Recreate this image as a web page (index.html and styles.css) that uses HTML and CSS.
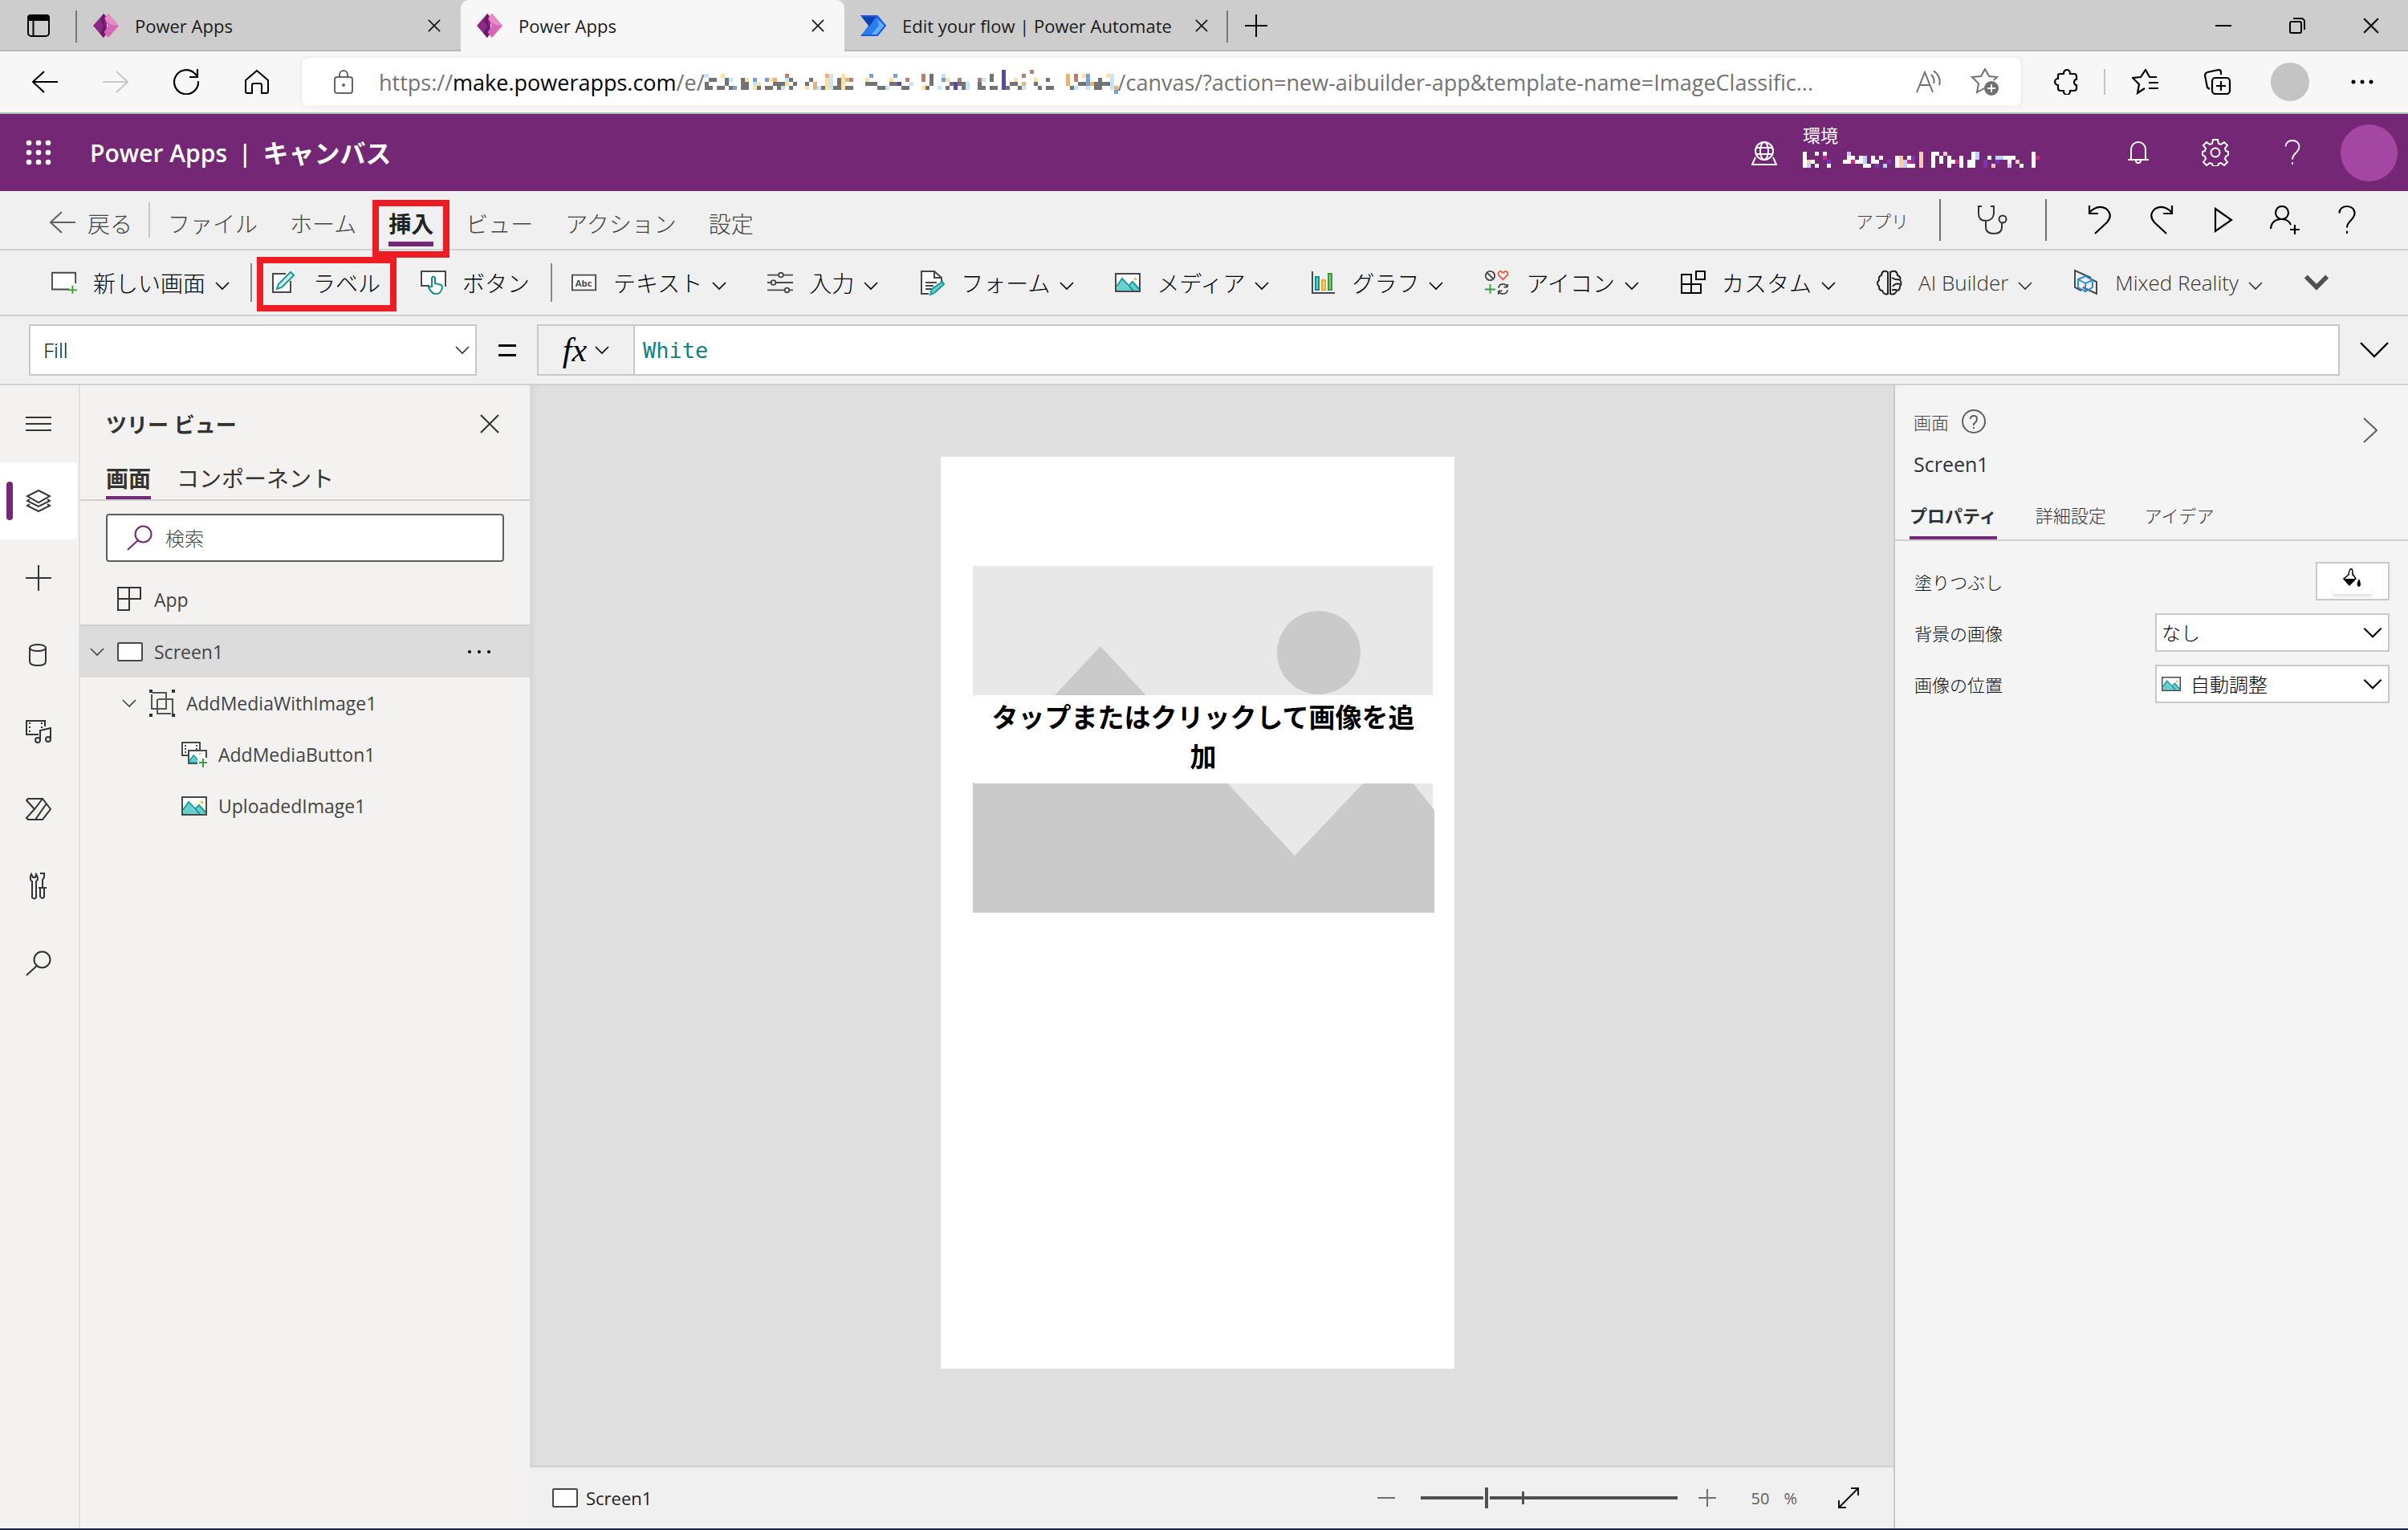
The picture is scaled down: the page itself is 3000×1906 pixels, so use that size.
FILE: index.html
```html
<!DOCTYPE html>
<html lang="ja">
<head>
<meta charset="utf-8">
<meta name="viewport" content="width=device-width, initial-scale=1">
<title>Power Apps | キャンバス</title>
<link rel="stylesheet" href="styles.css">
</head>
<body>
<svg class="sprite" aria-hidden="true">
  <symbol id="chev" viewBox="0 0 18 12"><path d="M1 2l8 8 8-8" fill="none" stroke="currentColor" stroke-width="1.6"/></symbol>
  <symbol id="close" viewBox="0 0 18 18"><path d="M1 1l16 16M17 1L1 17" fill="none" stroke="currentColor" stroke-width="2"/></symbol>
  <symbol id="app-logo" viewBox="0 0 32 32">
    <path d="M13 1L0 16l13 15 4-5V5z" fill="#8b2a86"/>
    <path d="M13 1l4 5-3 7 3 8-4 10-5-6 5-8-4-8z" fill="#6b1a68"/>
    <path d="M19 1l13 15-13 15-5-6c0-5 6-6 4-11-2-4-5-5-3-9z" fill="#d667b5"/>
    <path d="M19 1l13 15-9-1-6-4-2-5z" fill="#e58bc8"/>
  </symbol>
  <symbol id="picture" viewBox="0 0 32 24">
    <path d="M1 1h30v22H1z" fill="#fff"/>
    <path d="M2 19L9 8l8 10 5-6 8 8v2H2z" fill="#66cfcf"/>
    <path d="M2 17L9 7l14 15M17 16l5-5 8 9" fill="none" stroke="#1a9a96" stroke-width="2"/>
    <path d="M24 6h3v3h-3z" fill="#ffb94f"/>
    <path d="M1 1h30v22H1z" fill="none" stroke="#484848" stroke-width="2"/>
  </symbol>
  <symbol id="screen" viewBox="0 0 32 24"><rect x="1" y="1" width="30" height="22" rx="1" fill="#fff" stroke="#484848" stroke-width="2"/></symbol>
  <symbol id="search" viewBox="0 0 32 32"><path d="M14 19L1 31" fill="none" stroke="currentColor" stroke-width="2"/><circle cx="20.500" cy="11.500" r="10" fill="none" stroke="currentColor" stroke-width="2"/></symbol>
  <symbol id="help" viewBox="0 0 20 34"><path d="M1 9c0-5 4-8 9-8s9 3 9 8c0 8-9 9-9 17M10 30v3" fill="none" stroke="currentColor" stroke-width="2"/></symbol>
</svg>

<header class="browser">
  <div class="tabstrip">
    <button class="tab-menu" aria-label="タブ操作メニュー"><svg width="28" height="28" viewBox="0 0 28 28"><path d="M0 8V4a4 4 0 014-4h20a4 4 0 014 4v4z"/><rect x="1" y="1" width="26" height="26" rx="4" fill="none" stroke="#000" stroke-width="2"/><path d="M7.500 8v19" stroke="#000" stroke-width="2"/></svg></button>
    <div class="tab"><svg width="32" height="32"><use href="#app-logo"/></svg><span>Power Apps</span><button aria-label="閉じる"><svg width="16" height="16"><use href="#close"/></svg></button></div>
    <div class="tab active"><svg width="32" height="32"><use href="#app-logo"/></svg><span>Power Apps</span><button aria-label="閉じる"><svg width="16" height="16"><use href="#close"/></svg></button></div>
    <div class="tab"><svg width="32" height="26" viewBox="0 0 32 26"><path d="M0 0h21l11 13-11 13H0l10-13z" fill="#2b7cf0"/><path d="M0 0h21l-10 14z" fill="#0d3fb5"/><path d="M21 6l11 7-11 13h-9l11-13z" fill="#62b0fb"/><path d="M1 1h20l10 12-10 12H1" fill="none" stroke="#1a56e8" stroke-width="2"/></svg><span>Edit your flow | Power Automate</span><button aria-label="閉じる"><svg width="16" height="16"><use href="#close"/></svg></button></div>
    <button class="new-tab" aria-label="新しいタブ"><svg width="28" height="28" viewBox="0 0 28 28"><path d="M14 0v28M0 14h28" stroke="#000" stroke-width="2"/></svg></button>
    <div class="window-buttons">
      <button aria-label="最小化"><svg width="20" height="20" viewBox="0 0 20 20"><path d="M0 10h20" stroke="#000" stroke-width="2"/></svg></button>
      <button aria-label="元に戻す"><svg width="20" height="20" viewBox="0 0 20 20" fill="none" stroke="#000" stroke-width="2"><rect x="1" y="5" width="14" height="14" rx="2"/><path d="M5 1h10a4 4 0 014 4v10"/></svg></button>
      <button aria-label="閉じる"><svg width="20" height="20"><use href="#close"/></svg></button>
    </div>
  </div>
  <div class="addressrow">
    <nav class="nav-buttons">
      <button aria-label="戻る"><svg width="32" height="28" viewBox="0 0 32 28" fill="none" stroke="#000" stroke-width="2"><path d="M32 14H1M15 1L1 14l14 13"/></svg></button>
      <button aria-label="進む"><svg width="32" height="28" viewBox="0 0 32 28" fill="none" stroke="#c8c8c8" stroke-width="2"><path d="M0 14h31M17 1l14 13-14 13"/></svg></button>
      <button aria-label="更新"><svg width="32" height="32" viewBox="0 0 32 32" fill="none" stroke="#000" stroke-width="2.200"><path d="M31 15a15 15 0 11-5-10l4 4M30 0v10H20"/></svg></button>
      <button aria-label="ホーム"><svg width="30" height="30" viewBox="0 0 30 30" fill="none" stroke="#000" stroke-width="2"><path d="M15 1L1 13v14a2 2 0 002 2h6V19a2 2 0 012-2h8a2 2 0 012 2v10h6a2 2 0 002-2V13z"/></svg></button>
    </nav>
    <div class="addressbar">
      <svg class="lock" width="24" height="30" viewBox="0 0 24 30" fill="none" stroke="#666" stroke-width="2"><rect x="1" y="9" width="22" height="20" rx="3"/><path d="M7 9V6a5 5 0 0110 0v3"/><circle cx="12" cy="19" r="1"/></svg>
      <span class="url">https://<b>make.powerapps.com</b>/e/</span>
      <svg class="mosaic" width="515" height="30" viewBox="0 -1 103 6" shape-rendering="crispEdges">
        <path fill="#737373" d="M1 1h2v1H1zM0 2h1v1H0zM0 3h2v1H0zM5 1h1v2H5zM3 3h2v1H3zM6 3h2v1H6zM9 1h2v3H9zM12 3h2v1h-2zM15 3h2v1h-2zM17 2h4v1h-4zM18 3h1v1h-1zM21 1h1v1h-1zM22 2h1v1h-1zM21 3h1v1h-1zM26 1h1v1h-1zM25 2h1v1h-1zM29 3h1v1h-1zM32 3h1v1h-1zM33 1h1v3h-1zM35 3h2v1h-2zM40 2h3v1h-3zM43 3h2v1h-2zM46 2h2v1h-2zM49 3h2v1h-2zM56 0h1v3h-1zM55 3h1v1h-1zM61 2h4v1h-4zM64 3h1v1h-1zM60 3h1v1h-1zM68 2h1v1h-1zM68 3h2v1h-2zM71 0h1v2h-1zM71 3h2v1h-2zM75 3h1v1h-1zM76 2h2v1h-2zM78 3h1v1h-1zM82 2h1v1h-1zM83 3h1v1h-1zM85 1h1v1h-1zM85 3h2v1h-2zM91 3h1v1h-1zM93 2h2v1h-2zM97 2h5v1h-5zM97 3h2v1h-2zM98 1h1v1h-1z"/>
        <path fill="#ffe0a8" d="M4 0h1v1H4zM10 1h1v1h-1zM13 2h1v1h-1zM16 1h1v1h-1zM20 2h1v1h-1zM25 3h1v1h-1zM30 1h1v3h-1zM34 0h1v4h-1zM40 1h1v1h-1zM46 1h1v1h-1zM54 3h1v1h-1zM60 1h1v1h-1zM77 1h1v1h-1zM82 1h1v1h-1zM94 0h1v1h-1zM100 0h1v1h-1zM12 3h1v1h-1z"/>
        <path fill="#e8b27a" d="M17 1h1v1h-1zM27 2h1v2h-1zM30 0h1v1h-1zM35 1h1v1h-1zM79 2h1v1h-1zM90 0h1v3h-1zM96 2h1v1h-1zM102 3h1v1h-1z"/>
        <path fill="#b58070" d="M20 0h1v1h-1zM36 1h1v1h-1zM50 1h1v1h-1zM54 0h1v2h-1zM68 1h1v1h-1zM79 0h1v1h-1zM81 -1h1v1h-1zM92 0h1v2h-1zM63 1h1v1h-1z"/>
        <path fill="#6fa3dc" d="M15 1h1v1h-1zM7 3h1v1H7zM41 0h1v1h-1zM47 0h1v1h-1zM59 1h1v1h-1zM95 0h1v4h-1zM102 4h1v1h-1zM12 1h1v1h-1z"/>
        <path fill="#c3e6ff" d="M0 0h1v1H0zM6 1h1v1H6zM12 2h1v1h-1zM19 3h1v1h-1zM20 1h1v1h-1zM28 3h1v1h-1zM31 0h1v4h-1zM45 3h1v1h-1zM51 2h1v1h-1zM59 0h1v1h-1zM58 3h1v1h-1zM65 2h1v2h-1zM69 1h1v1h-1zM79 3h1v1h-1zM92 3h1v1h-1zM101 0h1v4h-1zM95 3h1v1h-1z"/>
        <path fill="#5a4c94" d="M48 2h1v1h-1zM62 2h1v2h-1zM74 -1h1v5h-1z"/>
      </svg>
      <span class="url">/canvas/?action=new-aibuilder-app&amp;template-name=ImageClassific...</span>
      <span class="address-actions">
        <button aria-label="音声で読み上げる"><svg width="32" height="28" viewBox="0 0 32 28" fill="none" stroke="#707070" stroke-width="2"><path d="M1 27L11 2l10 25M5 18h12M19 5q5 5 3 11M22 0q10 8 7 18"/></svg></button>
        <button aria-label="お気に入りに追加"><svg width="36" height="34" viewBox="0 0 36 34"><path d="M17 25l-9 5 2-11-8-8 11-1 5-9 5 9 10 1-4 4" fill="none" stroke="#707070" stroke-width="2"/><circle cx="26" cy="25" r="9" fill="#707070"/><path d="M26 20v10M21 25h10" stroke="#fff" stroke-width="2"/></svg></button>
      </span>
    </div>
    <div class="browser-actions">
      <button aria-label="拡張機能"><svg width="30" height="32" viewBox="0 0 30 32" fill="none" stroke="#000" stroke-width="2.200"><path d="M7 6h5v-1a4 4 0 018 0v1h5q3 0 3 3v4h-1a4 4 0 000 7h1v4q0 3-3 3h-5v1a4 4 0 01-8 0v-1H8q-3 0-3-3v-4a4 4 0 010-8V8q0-2 2-2z"/></svg></button>
      <i class="rule"></i>
      <button aria-label="お気に入り"><svg width="34" height="32" viewBox="0 0 34 32" fill="none" stroke="#000" stroke-width="2.200"><path d="M16 24l-9 6 2-11-8-8 10-1 6-9 5 9h9M21 17h12M21 24h12"/></svg></button>
      <button aria-label="コレクション"><svg width="34" height="32" viewBox="0 0 34 32" fill="none" stroke="#000" stroke-width="2.200"><path d="M7 25l-3-2L1 8q0-3 3-4l14-3q3 0 3 3v3"/><rect x="10" y="11" width="22" height="20" rx="4"/><path d="M21 15v12M15 21h12"/></svg></button>
      <button aria-label="プロファイル"><i class="profile"></i></button>
      <button aria-label="設定など"><svg width="28" height="6" viewBox="0 0 28 6"><circle cx="3" cy="3" r="2.500"/><circle cx="14" cy="3" r="2.500"/><circle cx="25" cy="3" r="2.500"/></svg></button>
    </div>
  </div>
</header>

<header class="suite">
  <button class="waffle" aria-label="アプリ起動ツール"><svg width="32" height="32" viewBox="0 0 32 32" fill="#fff"><circle cx="4" cy="4" r="3.300"/><circle cx="16" cy="4" r="3.300"/><circle cx="28" cy="4" r="3.300"/><circle cx="4" cy="16" r="3.300"/><circle cx="16" cy="16" r="3.300"/><circle cx="28" cy="16" r="3.300"/><circle cx="4" cy="28" r="3.300"/><circle cx="16" cy="28" r="3.300"/><circle cx="28" cy="28" r="3.300"/></svg></button>
  <h1><span>Power Apps</span><span>|</span><span class="area">キャンバス</span></h1>
  <div class="environment">
    <svg width="32" height="30" viewBox="0 0 32 30" fill="none" stroke="#fff" stroke-width="2"><circle cx="16" cy="12" r="11"/><ellipse cx="16" cy="12" rx="5" ry="11"/><path d="M6 8h20M6 16h20M5 20l-4 9h30l-4-9"/></svg>
    <div>
      <span>環境</span>
      <svg width="295" height="20" viewBox="0 0 59 4" shape-rendering="crispEdges">
        <path fill="#fff" d="M0 0h1v4H0zM1 2h2v1H1zM3 0h1v1H3zM3 3h1v1H3zM5 0h1v1H5zM6 3h1v1H6zM10 2h2v1h-2zM11 0h1v2h-1zM12 1h1v1h-1zM13 2h1v1h-1zM14 1h1v2h-1zM15 3h2v1h-2zM17 1h1v2h-1zM18 2h1v1h-1zM19 1h1v1h-1zM23 1h1v3h-1zM26 1h1v1h-1zM26 3h2v1h-2zM32 0h2v1h-2zM32 1h1v3h-1zM34 1h1v2h-1zM36 1h1v3h-1zM37 2h2v1h-2zM39 1h1v3h-1zM41 2h1v2h-1zM42 0h1v4h-1zM46 1h1v1h-1zM50 1h3v1h-3zM51 2h1v2h-1zM54 3h1v1h-1zM57 0h1v4h-1z"/>
        <path fill="#b5d4ff" d="M1 3h1v1H1zM11 0h1v1h-1zM15 1h1v2h-1zM20 3h1v1h-1zM25 2h1v2h-1zM43 0h1v2h-1zM48 1h2v1h-2zM51 3h1v1h-1z"/>
        <path fill="#ffcbb0" d="M24 1h1v3h-1zM29 0h1v4h-1zM35 0h1v1h-1zM47 3h1v1h-1zM53 2h1v1h-1zM1 2h1v1H1z"/>
        <path fill="#7a35b8" d="M6 2h1v1H6zM18 3h1v1h-1zM21 2h1v1h-1zM27 1h1v2h-1zM45 2h1v2h-1zM48 2h1v1h-1z"/>
        <path fill="#c8307a" d="M5 1h1v1H5zM12 2h1v1h-1zM26 2h1v1h-1zM38 2h1v1h-1zM58 1h1v1h-1z"/>
      </svg>
    </div>
  </div>
  <div class="suite-actions">
    <button aria-label="通知"><svg width="26" height="28" viewBox="0 0 26 28" fill="none" stroke="#fff" stroke-width="2"><path d="M0 23h26M4 23V10a9 9 0 0118 0v13M10 24a3 3 0 006 0"/></svg></button>
    <button aria-label="設定"><svg width="34" height="34" viewBox="0 0 34 34" fill="none" stroke="#fff" stroke-width="2"><path d="M14 1h6l1 5 3 1 4-3 4 4-3 4 1 3 3 1v4l-3 2-1 3 3 4-4 4-4-3-3 1-1 3h-6l-1-3-3-1-4 3-4-4 3-4-1-3-3-2v-4l3-1 1-3-3-4 4-4 4 3 3-1z"/><circle cx="17" cy="17" r="5.500"/></svg></button>
    <button aria-label="ヘルプ"><svg width="20" height="32"><use href="#help"/></svg></button>
    <i class="avatar"></i>
  </div>
</header>

<nav class="menubar">
  <button class="back"><svg width="32" height="28" viewBox="0 0 32 28" fill="none" stroke="#606060" stroke-width="2"><path d="M32 14H1M15 1L1 14l14 13"/></svg>戻る</button>
  <div class="menus">
    <button>ファイル</button><button>ホーム</button><button class="current">挿入</button><button>ビュー</button><button>アクション</button><button>設定</button>
  </div>
  <div class="menu-actions">
    <span class="app-label">アプリ</span>
    <button class="checker" aria-label="アプリ チェッカー"><svg width="38" height="36" viewBox="0 0 38 36" fill="none" stroke="#333" stroke-width="2"><path d="M5 1H1v9q0 9 9 9t10-9V1h-4M10 19v8q0 8 10 8t10-8v-6"/><circle cx="31" cy="17" r="4.500"/></svg></button>
    <button aria-label="元に戻す"><svg width="30" height="36" viewBox="0 0 30 36" fill="none" stroke="#000" stroke-width="2.200"><path d="M2 0v10h11M2 9q10-11 21-5 9 8 1 17L9 35"/></svg></button>
    <button aria-label="やり直し"><svg width="30" height="36" viewBox="0 0 30 36" fill="none" stroke="#000" stroke-width="2.200"><path d="M28 0v10H17M28 9Q18-2 7 4q-9 8-1 17l15 14"/></svg></button>
    <button aria-label="プレビュー"><svg width="24" height="32" viewBox="0 0 24 32" fill="none" stroke="#000" stroke-width="2.200"><path d="M2 2l20 14L2 30z"/></svg></button>
    <button aria-label="共有"><svg width="38" height="36" viewBox="0 0 38 36" fill="none" stroke="#000" stroke-width="2.200"><circle cx="15" cy="9" r="8"/><path d="M1 29q1-12 14-12 8 0 11 7M31 24v12M25 30h12"/></svg></button>
    <button aria-label="ヘルプ"><svg width="22" height="36"><use href="#help"/></svg></button>
  </div>
</nav>

<div class="toolbar">
  <button><svg width="34" height="30" viewBox="0 0 34 30"><path d="M24 24H1V2h31v14" fill="#fff" stroke="#484848" stroke-width="2"/><path d="M28 19v11M23 25h11" stroke="#3a9e3a" stroke-width="2"/></svg>新しい画面<svg class="chev"><use href="#chev"/></svg></button>
  <i class="rule"></i>
  <button class="marked"><svg width="32" height="28" viewBox="0 0 32 28"><path d="M24 12v14H2V3h16" fill="#fff" stroke="#484848" stroke-width="2"/><path d="M7 22l2-6L24 1l4 4-15 15z" fill="#cfeeee" stroke="#1a9a96" stroke-width="2"/></svg>ラベル</button>
  <button><svg width="32" height="30" viewBox="0 0 32 30"><path d="M31 20V1H1v18h10" fill="#fff" stroke="#484848" stroke-width="2"/><path d="M14 20V9q2-3 4 0v7l8 2q2 4-1 8-1 3-7 3-5-1-8-8z" fill="#fff" stroke="#0f908c" stroke-width="2"/></svg>ボタン</button>
  <i class="rule"></i>
  <button><svg width="34" height="24" viewBox="0 0 34 24"><path d="M1 2h31v20H1z" fill="#fff" stroke="#484848" stroke-width="2"/><text x="5" y="17" class="abc">Abc</text></svg>テキスト<svg class="chev"><use href="#chev"/></svg></button>
  <button><svg width="34" height="30" viewBox="0 0 34 30" fill="#fff" stroke="#484848" stroke-width="2"><path d="M0 5h34M0 15h34M0 25h34"/><circle cx="18" cy="5" r="3"/><circle cx="8" cy="15" r="3"/><circle cx="26" cy="25" r="3"/></svg>入力<svg class="chev"><use href="#chev"/></svg></button>
  <button><svg width="32" height="32" viewBox="0 0 32 32"><path d="M12 30H3V2h16l9 8v5" fill="#fff" stroke="#484848" stroke-width="2"/><path d="M19 2v8h8M8 16h14M8 20h10M8 24h8" fill="none" stroke="#484848" stroke-width="2"/><path d="M14 31l2-7 13-9 2 3-12 11z" fill="#66cfcf" stroke="#1a9a96" stroke-width="2"/></svg>フォーム<svg class="chev"><use href="#chev"/></svg></button>
  <button><svg width="32" height="24"><use href="#picture"/></svg>メディア<svg class="chev"><use href="#chev"/></svg></button>
  <button><svg width="32" height="28" viewBox="0 0 32 28"><path d="M3 0v27h28" fill="none" stroke="#484848" stroke-width="2"/><path d="M7 7h4v16H7z" fill="#66cfcf" stroke="#0f908c" stroke-width="2"/><path d="M15 11h4v12h-4z" fill="#ffd79a" stroke="#f5a623" stroke-width="2"/><path d="M23 3h4v20h-4z" fill="#7cc77c" stroke="#3a9e3a" stroke-width="2"/></svg>グラフ<svg class="chev"><use href="#chev"/></svg></button>
  <button><svg width="34" height="32" viewBox="0 0 34 32" fill="none" stroke-width="2"><circle cx="8" cy="7" r="6" stroke="#484848"/><path d="M4 3l8 8" stroke="#484848"/><path d="M25 12l-6-6q-1-5 3-5l3 2 3-2q4 0 3 5z" stroke="#f0593e"/><path d="M8 18v13M1 25h14" stroke="#3a9e3a"/><path d="M19 23q1-5 6-5 4 0 6 4v-4M31 22h-5M31 26q-1 5-6 5-4 0-6-4v5M19 27h5" stroke="#484848"/></svg>アイコン<svg class="chev"><use href="#chev"/></svg></button>
  <button><svg width="32" height="32" viewBox="0 0 32 32" fill="none" stroke="#000" stroke-width="2"><path d="M2 6h12v12H2zM2 18h12v11H2zM14 18h12v11H14zM20 2h11v10H20z"/></svg>カスタム<svg class="chev"><use href="#chev"/></svg></button>
  <button class="latin"><svg width="32" height="32" viewBox="0 0 32 32" fill="none" stroke="#222" stroke-width="2"><path d="M14 3q-7-4-8 4-4 1-3 6-4 4 0 8 0 5 4 5 2 6 7 4zM17 3q8-4 9 4 5 2 3 6 3 4 0 8 0 5-4 5-2 6-8 4zM19 10q4 3 9 2M29 18q-6-2-9 3M19 25h6"/></svg>AI Builder<svg class="chev"><use href="#chev"/></svg></button>
  <button class="latin"><svg width="32" height="32" viewBox="0 0 32 32" fill="none" stroke-width="2"><path d="M22 10L2 1v21l8 4M17 9l12 6v15L12 22" stroke="#484848"/><path d="M6 12l9-4 9 5v9l-9 5-9-5zM6 12l9 5 9-4M15 17v10" stroke="#2a8fd8"/></svg>Mixed Reality<svg class="chev"><use href="#chev"/></svg></button>
  <button class="more" aria-label="その他"><svg width="34" height="22" viewBox="0 0 34 22"><path d="M3 3l14 14L31 3" fill="none" stroke="#505050" stroke-width="6"/></svg></button>
</div>

<div class="formulabar">
  <label class="picker property"><select aria-label="プロパティ"><option>Fill</option></select><svg class="chev"><use href="#chev"/></svg></label>
  <span class="equals" aria-hidden="true"></span>
  <button class="fx">fx<svg class="chev"><use href="#chev"/></svg></button>
  <input class="formula" aria-label="数式" value="White">
  <button class="expand" aria-label="数式バーを展開"><svg width="36" height="22" viewBox="0 0 36 22"><path d="M1 2l17 17L35 2" fill="none" stroke="#000" stroke-width="2.400"/></svg></button>
</div>

<main class="studio">
  <nav class="rail">
    <button aria-label="展開"><svg width="32" height="20" viewBox="0 0 32 20"><path d="M0 2h32M0 10h32M0 18h32"/></svg></button>
    <button class="selected" aria-label="ツリー ビュー"><svg width="32" height="28" viewBox="0 0 32 28"><path d="M16 1l14 7-14 8L2 8zM5 12l-3 2 14 7 14-7-3-2M5 18l-3 2 14 7 14-7-3-2"/></svg></button>
    <button aria-label="挿入"><svg width="32" height="32" viewBox="0 0 32 32"><path d="M16 0v32M0 16h32"/></svg></button>
    <button aria-label="データ"><svg width="32" height="28" viewBox="0 0 32 28"><path d="M5 5v17q0 5 10 5t10-5V5"/><ellipse cx="15" cy="5" rx="10" ry="4"/></svg></button>
    <button aria-label="メディア"><svg width="32" height="30" viewBox="0 0 32 30"><path d="M16 18H1V1h23v7M18 25V13l13-3v14"/><path d="M5 3v14M20 3v8" stroke-dasharray="2 3"/><circle cx="15" cy="25" r="3"/><circle cx="28" cy="24" r="3"/></svg></button>
    <button aria-label="Power Automate"><svg width="32" height="28" viewBox="0 0 32 28"><path d="M3 1h18l10 13-10 13H3l-2-2 10-11L1 3zM21 1L11 14M26 7L12 27"/></svg></button>
    <button aria-label="詳細ツール"><svg width="32" height="34" viewBox="0 0 32 34"><path d="M8 11Q4 8 7 2l2 4h3l1-4q4 6 0 9v20q-2 3-5 0zM18 1h5v5l-2 3v10M16 19h10M18 19v11q3 4 5 0V19"/></svg></button>
    <button aria-label="検索"><svg width="32" height="32"><use href="#search"/></svg></button>
  </nav>

  <aside class="tree">
    <div class="tree-head"><h2>ツリー ビュー</h2><button aria-label="閉じる"><svg width="24" height="24" viewBox="0 0 24 24"><path d="M1 1l22 22M23 1L1 23" stroke="#333" stroke-width="2"/></svg></button></div>
    <div class="tree-tabs"><button class="current">画面</button><button>コンポーネント</button></div>
    <label class="search"><svg width="32" height="32"><use href="#search"/></svg><input type="search" placeholder="検索" aria-label="検索"></label>
    <ul class="nodes">
      <li class="level1"><i class="chev"></i><svg width="32" height="32" viewBox="0 0 32 32" fill="none" stroke="#333" stroke-width="2"><path d="M1 1h14v14H1zM15 1h14v14H15zM1 15h14v14H1z"/></svg><span>App</span></li>
      <li class="level1 selected"><svg class="chev"><use href="#chev"/></svg><svg width="32" height="24"><use href="#screen"/></svg><span>Screen1</span><button aria-label="その他のアクション"><svg width="30" height="6" viewBox="0 0 30 6"><circle cx="3" cy="3" r="2"/><circle cx="15" cy="3" r="2"/><circle cx="27" cy="3" r="2"/></svg></button></li>
      <li class="level2"><svg class="chev"><use href="#chev"/></svg><svg width="32" height="34" viewBox="0 0 32 34" fill="none" stroke="#555" stroke-width="2"><path d="M4 4h17v20H3V6M11 12h18v18M10 12v18h17"/><path d="M0 0h4v4H0zM28 0h4v4h-4zM0 30h4v4H0zM28 30h4v4h-4z" fill="#333" stroke="none"/></svg><span>AddMediaWithImage1</span></li>
      <li class="level3"><svg width="32" height="32" viewBox="0 0 32 32"><path d="M1 1h22v16H1z" fill="#fff" stroke="#484848" stroke-width="2"/><path d="M5 4v12M19 4v6" stroke="#484848" stroke-width="2" stroke-dasharray="2"/><path d="M9 11h22v16H9z" fill="#fff" stroke="#484848" stroke-width="2"/><path d="M10 24l5-7 9 9H10z" fill="#66cfcf" stroke="#1a9a96" stroke-width="1.500"/><path d="M22 14h2v2h-2z" fill="#ffb94f"/><path d="M20 20h12v12H20z" fill="#f3f2f1"/><path d="M27 21v11M22 26h10" stroke="#3a9e3a" stroke-width="2"/></svg><span>AddMediaButton1</span></li>
      <li class="level3"><svg width="32" height="24"><use href="#picture"/></svg><span>UploadedImage1</span></li>
    </ul>
  </aside>

  <section class="workspace">
    <div class="stage">
      <div class="phone">
        <button class="add-picture">
          <svg viewBox="0 0 575 432"><path d="M0 0h573v432H0z" fill="#e8e8e8"/><path d="M0 271L159 100l242 261L520 235l55 69v128H0z" fill="#cacaca"/><circle cx="431" cy="108" r="52" fill="#cacaca"/></svg>
          <span>タップまたはクリックして画像を追加</span>
        </button>
      </div>
    </div>
    <footer class="statusbar">
      <svg width="32" height="24"><use href="#screen"/></svg><span class="screen-name">Screen1</span>
      <button aria-label="縮小"><svg width="22" height="22" viewBox="0 0 22 22"><path d="M0 11h22"/></svg></button>
      <span class="zoom"><input type="range" min="0" max="100" value="25" aria-label="ズーム"><i></i></span>
      <button aria-label="拡大"><svg width="22" height="22" viewBox="0 0 22 22"><path d="M0 11h22M11 0v22"/></svg></button>
      <span class="percent"><span>50</span><span>%</span></span>
      <button class="fit" aria-label="ウィンドウに合わせる"><svg width="28" height="28" viewBox="0 0 28 28"><path d="M2 26L26 2M17 2h9v9M2 17v9h9"/></svg></button>
    </footer>
  </section>

  <aside class="inspector">
    <div class="inspector-head">
      <div>
        <p class="kind">画面<svg width="30" height="30" viewBox="0 0 30 30" fill="none" stroke="#606060" stroke-width="2"><circle cx="15" cy="15" r="14"/><path d="M11 12q0-4 4-4t4 4q0 3-4 6v2M15 22v2"/></svg></p>
        <p class="name">Screen1</p>
      </div>
      <button aria-label="折りたたむ"><svg width="18" height="32" viewBox="0 0 18 32"><path d="M1 1l16 15L1 31" fill="none" stroke="#606060" stroke-width="2"/></svg></button>
    </div>
    <div class="inspector-tabs"><button class="current">プロパティ</button><button>詳細設定</button><button>アイデア</button></div>
    <div class="props">
      <span>塗りつぶし</span>
      <button class="fill" aria-label="塗りつぶし"><svg width="24" height="24" viewBox="0 0 24 24"><path d="M9 1q3-1 3 4v4M9 1Q7 5 7 8L1 13l7 8 8-8-4-6" fill="none" stroke="#000" stroke-width="1.500"/><path d="M1 13h15l-8 8zM20 13q4 9 0 10-5-1 0-10z"/></svg><i></i></button>
      <label for="bg">背景の画像</label>
      <span class="picker"><select id="bg"><option>なし</option></select><svg class="chev"><use href="#chev"/></svg></span>
      <label for="pos">画像の位置</label>
      <span class="picker with-icon"><select id="pos"><option>自動調整</option></select><svg class="thumb" width="24" height="20"><use href="#picture"/></svg><svg class="chev"><use href="#chev"/></svg></span>
    </div>
  </aside>
</main>
</body>
</html>
```
FILE: styles.css
```css
:root {
  --purple: #742774;
  --line: #d0d0d0;
  --ink: #333;
}

* { box-sizing: border-box; }

body {
  margin: 0;
  min-height: 100vh;
  display: flex;
  flex-direction: column;
  font-family: "Open Sans", "Noto Sans CJK JP", sans-serif;
  font-size: 22px;
  color: var(--ink);
  background: #f3f2f1;
  border-bottom: 2px solid #1a2440;
}

button, input, select {
  font: inherit;
  color: inherit;
  background: none;
  border: 0;
  padding: 0;
  margin: 0;
  border-radius: 0;
}

button {
  display: flex;
  align-items: center;
  justify-content: center;
  white-space: nowrap;
}

svg { flex: none; display: block; }
h1, h2, p, ul { margin: 0; padding: 0; }
.sprite { position: absolute; width: 0; height: 0; }
.chev { width: 18px; height: 12px; flex: none; }

/* Browser frame */
.tabstrip {
  display: flex;
  height: 64px;
  background: #cdcdcd;
  color: #1b1b1b;
  box-shadow: inset 0 -2px 1px #b8b8b8;
}
.tab-menu { width: 96px; }
.tab-menu, .tab:nth-child(4) { position: relative; }
.tab-menu::after, .tab:nth-child(4)::after {
  content: "";
  position: absolute;
  right: 0;
  top: 13px;
  width: 2px;
  height: 40px;
  background: #777;
}
.tab {
  width: 478px;
  display: flex;
  align-items: center;
  padding: 0 25px 0 20px;
}
.tab span { flex: 1; padding-left: 20px; }
.tab button { width: 16px; }
.tab.active { background: #f7f7f7; border-radius: 10px 10px 0 0; }
.new-tab { width: 70px; }
.window-buttons { display: flex; margin-left: auto; }
.window-buttons button { width: 92px; }

.addressrow {
  display: flex;
  align-items: center;
  height: 78px;
  padding-left: 12px;
  background: #f7f7f7;
  border-bottom: 2px solid #b4beb6;
}
.nav-buttons { display: flex; width: 364px; }
.nav-buttons button { width: 88px; }
.addressbar {
  flex: 1;
  display: flex;
  align-items: center;
  height: 60px;
  padding: 0 27px 0 40px;
  background: #fff;
  border-radius: 8px;
  box-shadow: 0 0 4px #ddd;
  font-size: 27px;
  color: #737373;
}
.lock { margin-right: 32px; }
.url b { font-weight: 400; color: #000; }
.address-actions { display: flex; gap: 36px; margin-left: auto; }
.browser-actions { display: flex; align-items: center; width: 482px; }
.browser-actions button { width: 90px; }
.browser-actions button:first-child { width: 103px; padding-left: 9px; }
.browser-actions .rule { width: 2px; height: 32px; margin-right: 5px; background: #c4c4c4; }
.profile { width: 48px; height: 48px; border-radius: 50%; background: #c4c4c4; }

/* Suite header */
.suite {
  display: flex;
  align-items: center;
  height: 96px;
  padding-right: 13px;
  background: var(--purple);
  color: #fff;
}
.waffle { width: 96px; }
.suite h1 {
  display: flex;
  align-items: center;
  gap: 14px;
  padding: 2px 0 0 16px;
  font-size: 30px;
  font-weight: 600;
  line-height: 44px;
}
.suite .area { font-size: 32px; }
.environment { display: flex; align-items: center; gap: 32px; margin-left: auto; }
.environment > svg { margin-top: 2px; }
.environment div { display: flex; flex-direction: column; gap: 4px; width: 370px; padding-bottom: 8px; line-height: 34px; }
.environment div svg { margin-bottom: 12px; }
.suite-actions { display: flex; align-items: center; }
.suite-actions button { width: 96px; }
.avatar { width: 71px; height: 71px; margin-left: 12px; border-radius: 50%; background: #a347a3; }

/* Menu bar */
.menubar {
  display: flex;
  align-items: center;
  height: 74px;
  padding-left: 62px;
  background: #f0f0f0;
  border-bottom: 2px solid var(--line);
  font-size: 28px;
  font-weight: 300;
  color: #444;
}
.back { gap: 15px; padding: 8px 20px 0 0; border-right: 2px solid #c8c8c8; height: 44px; }
.back svg { margin-bottom: 2px; }
.menus { display: flex; gap: 40px; padding-left: 22px; height: 100%; }
.menus button { padding-top: 8px; }
.menus .current { position: relative; font-weight: 700; color: #222; }
.menus .current::before {
  content: "";
  position: absolute;
  inset: 63px 0 auto;
  height: 6px;
  background: var(--purple);
}
.menus .current::after {
  content: "";
  position: absolute;
  z-index: 2;
  inset: 11px -20px -11px;
  border: 8px solid #ee1c23;
}
.menu-actions { display: flex; align-items: center; margin-left: auto; padding-right: 38px; }
.menu-actions button { width: 77px; color: #000; }
.app-label { padding-right: 38px; font-size: 22px; }
.menu-actions .checker { width: 134px; height: 52px; border: solid #707070; border-width: 0 2px; margin-right: 27px; }

/* Insert toolbar */
.toolbar {
  display: flex;
  align-items: center;
  height: 82px;
  padding-left: 64px;
  background: #f0f0f0;
  border-bottom: 2px solid var(--line);
  font-size: 28px;
  font-weight: 300;
  color: #000;
}
.toolbar button { gap: 20px; margin-right: 50px; height: 64px; }
.toolbar .rule ~ .rule ~ button { margin-right: 51px; }
.toolbar button > svg:first-child { width: 32px; overflow: visible; }
.toolbar button > .chev { margin-left: -8px; margin-top: 8px; }
.toolbar .rule { width: 2px; height: 48px; margin: 0 24px 0 -24px; background: #888; }
.toolbar .latin { font-size: 26px; color: #333; }
.toolbar .marked { position: relative; }
.toolbar .marked::after {
  content: "";
  position: absolute;
  z-index: 2;
  inset: 0 -20px -4px -18px;
  border: 8px solid #ee1c23;
}
.abc { font: 700 12px "Open Sans", sans-serif; fill: #484848; }

/* Formula bar */
.formulabar {
  display: flex;
  align-items: center;
  height: 86px;
  padding-left: 36px;
  background: #f0f0f0;
  border-bottom: 2px solid var(--line);
}
.picker { display: grid; align-items: center; }
.picker > * { grid-area: 1 / 1; }
.picker select {
  width: 100%;
  height: 48px;
  padding: 0 6px;
  appearance: none;
  background: #fff;
  border: 2px solid #c8c8c8;
  font-size: 24px;
  font-weight: 300;
  color: #000;
}
.picker .chev { justify-self: end; margin-right: 9px; pointer-events: none; }
.picker.property { width: 558px; }
.picker.property select { height: 64px; padding: 0 16px; font-size: 26px; }
.equals { width: 22px; height: 15px; margin: 0 26px 0 27px; border: solid #000; border-width: 3px 0; }
.fx {
  width: 120px;
  height: 64px;
  gap: 10px;
  border: 2px solid #c8c8c8;
  border-right: 0;
  font: italic 42px "Liberation Serif", serif;
  color: #000;
}
.formula {
  flex: 1;
  height: 64px;
  padding: 0 10px;
  background: #fff;
  border: 2px solid #c8c8c8;
  font: 27px "DejaVu Sans Mono", monospace;
  color: #0f7f80;
}
.expand { width: 85px; }

/* Studio body */
.studio { flex: 1; display: flex; }

.rail { width: 100px; border-right: 2px solid #e0dfde; }
.rail button { width: 96px; height: 96px; }
.rail svg { fill: none; stroke: #333; stroke-width: 2; }
.rail .selected { position: relative; background: #fff; border-radius: 0 4px 4px 0; }
.rail .selected::before {
  content: "";
  position: absolute;
  left: 8px;
  width: 8px;
  height: 48px;
  border-radius: 4px;
  background: var(--purple);
}

.tree { width: 560px; }
.tree-head { display: flex; align-items: center; justify-content: space-between; height: 96px; padding: 0 38px 0 32px; }
.tree-head h2 { font-size: 26px; }
.tree-tabs { display: flex; gap: 32px; height: 48px; padding-left: 32px; border-bottom: 2px solid var(--line); font-size: 28px; }
.tree-tabs button { padding-bottom: 4px; border-bottom: 4px solid transparent; }
.tree-tabs .current { font-weight: 700; border-color: var(--purple); }
.search {
  display: flex;
  align-items: center;
  gap: 16px;
  height: 60px;
  margin: 16px 32px 14px;
  padding: 0 24px;
  background: #fff;
  border: 2px solid #605e5c;
  border-radius: 4px;
  color: #742774;
}
.search input { flex: 1; outline: 0; font-size: 24px; font-weight: 300; }
.search input::placeholder { color: #444; }
.nodes { list-style: none; font-size: 23px; }
.nodes li { display: flex; align-items: center; height: 64px; color: #444; }
.nodes li:first-child { padding-top: 2px; }
.nodes .selected { background: #dcdcdc; border-top: 2px solid var(--line); height: 66px; }
.nodes span { padding-left: 14px; }
.nodes .chev { margin-right: 16px; }
.nodes button { margin-left: auto; }
.level1 { padding: 0 48px 0 12px; }
.level2 { padding-left: 52px; }
.level3 { padding-left: 126px; }

.workspace { flex: 1; display: flex; flex-direction: column; background: #dfdfdf; }
.stage { flex: 1; display: flex; justify-content: center; align-items: center; padding-right: 36px; box-shadow: inset 8px 0 8px -4px #d4d4d4; }
.phone { width: 640px; height: 1136px; padding: 136px 25px 0 40px; margin-bottom: 32px; background: #fff; }
.add-picture { display: grid; width: 100%; color: #000; font-weight: 700; white-space: normal; }
.add-picture > * { grid-area: 1 / 1; }
.add-picture svg { width: 100%; }
.add-picture span { height: 110px; padding: 3px 12px; background: #fff; border-radius: 4px; font-size: 33px; line-height: 49px; }

.statusbar { display: flex; align-items: center; height: 78px; padding: 0 42px 0 28px; background: #f0f0f0; border-top: 2px solid var(--line); color: #222; }
.screen-name { flex: 1; padding-left: 10px; }
.statusbar button svg { fill: none; stroke: #707070; stroke-width: 2; }
.statusbar .fit svg { stroke: #111; }
.zoom { position: relative; display: flex; width: 320px; margin: 0 26px 0 32px; }
.zoom input { width: 100%; height: 30px; appearance: none; }
.zoom input::-webkit-slider-runnable-track { height: 4px; background: #505050; }
.zoom input::-webkit-slider-thumb { appearance: none; width: 8px; height: 30px; margin-top: -13px; background: #505050; border: 2px solid #f0f0f0; }
.zoom i { position: absolute; left: 126px; top: 7px; width: 3px; height: 16px; background: #505050; }
.percent { display: flex; gap: 18px; margin: 0 50px 0 44px; font-size: 20px; color: #606060; }

.inspector { width: 641px; background: #f4f4f4; border-left: 2px solid #c8c8c8; }
.inspector-head { display: flex; justify-content: space-between; height: 136px; padding: 24px 38px 0 23px; }
.inspector-head button { height: 64px; }
.kind { display: flex; align-items: center; gap: 16px; height: 42px; font-weight: 300; color: #444; }
.name { padding-top: 14px; font-size: 25px; line-height: 36px; }
.inspector-tabs { display: flex; gap: 48px; height: 58px; padding-left: 18px; border-bottom: 2px solid var(--line); font-weight: 300; }
.inspector-tabs button { padding-bottom: 2px; border-bottom: 4px solid transparent; }
.inspector-tabs .current { font-weight: 700; border-color: var(--purple); }
.props { display: grid; grid-template-columns: 300px 1fr; grid-auto-rows: 48px; gap: 16px 0; align-items: center; padding: 26px 23px 0 24px; font-weight: 300; color: #111; }
.fill { justify-self: end; flex-direction: column; width: 92px; height: 48px; background: #fff; border: 2px solid #c8c8c8; }
.fill i { width: 48px; height: 8px; box-shadow: 0 3px 4px #ddd; }
.props .chev { width: 24px; height: 16px; color: #000; }
.picker.with-icon select { padding-left: 42px; }
.picker .thumb { margin-left: 8px; pointer-events: none; }
```
